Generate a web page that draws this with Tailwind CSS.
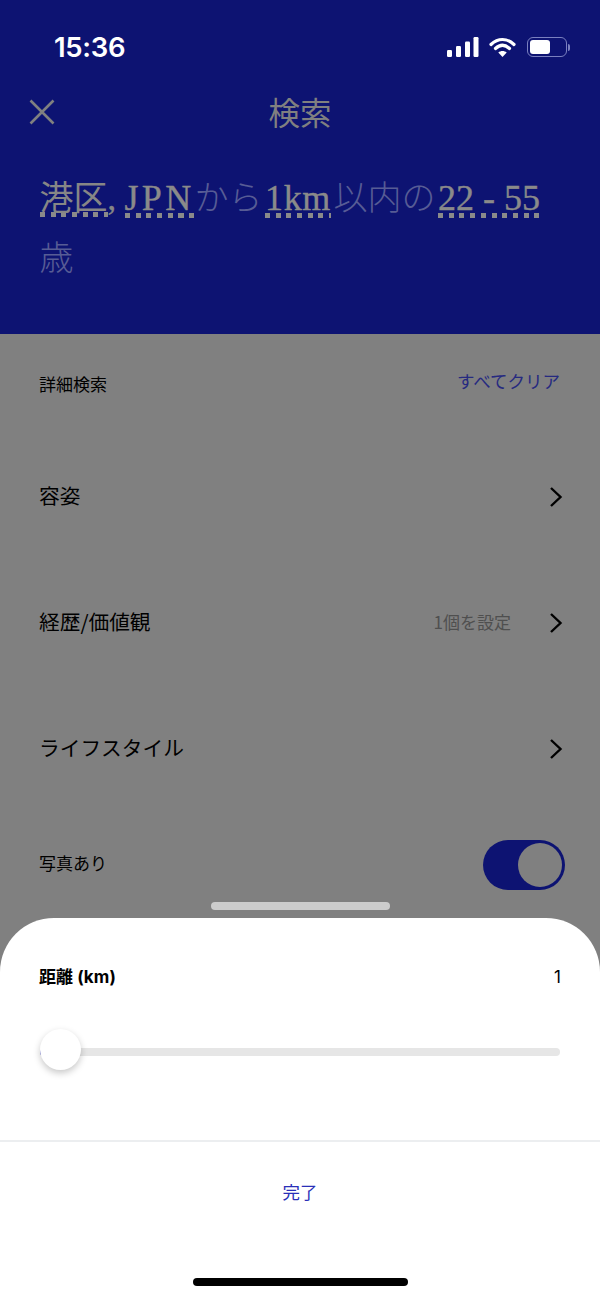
<!DOCTYPE html>
<html lang="ja">
<head>
<meta charset="utf-8">
<script src="https://cdn.jsdelivr.net/npm/@tailwindcss/browser@4"></script>
</head>
<body class="m-0">
<div class="relative w-[600px] h-[1299px] overflow-hidden bg-[#808080] font-['Inter','Noto_Sans_CJK_JP',sans-serif]">

  <!-- Search summary header -->
  <header class="h-[334px] bg-[#0d1372] pt-[30px]">
    <div class="flex items-center justify-between h-[36px] pl-[54px] pr-[30px]">
      <span class="text-[27.500px] font-semibold text-white leading-none tracking-[-0.3px]">15:36</span>
      <div class="flex items-center gap-[10px]">
        <svg width="32" height="20" viewBox="0 0 32 20" class="text-white -mt-[2px]"><g fill="currentColor"><rect x="0" y="13" width="5" height="7" rx="1.2"/><rect x="9" y="9" width="5" height="11" rx="1.2"/><rect x="18" y="4.500" width="5" height="15.500" rx="1.2"/><rect x="26.500" y="0" width="5" height="20" rx="1.2"/></g></svg>
        <svg width="27" height="20" viewBox="0 0 27 20" class="-mt-[2px]"><path d="M2 7.500C9 .8 18 .8 25 7.500M6.500 11.500C11 7.300 16 7.300 20.500 11.500" fill="none" stroke="#fff" stroke-width="3.200" stroke-linecap="round"/><path d="M13.500 20l-4.200-4.600c2.500-2 5.900-2 8.400 0z" fill="#fff"/></svg>
        <div class="flex items-center gap-[1px] -mt-[2px] ml-[1px]">
          <div class="w-[40px] h-[20px] rounded-[6px] border-[1.500px] border-[#7a80c0] p-[2px]">
            <div class="w-[20px] h-full rounded-[3px] bg-white"></div>
          </div>
          <div class="w-[2px] h-[7px] rounded-r-full bg-[#7a80c0]"></div>
        </div>
      </div>
    </div>

    <div class="relative flex items-center justify-center h-[60px] mt-[16px]">
      <svg width="28" height="28" viewBox="0 0 28 28" class="absolute left-[28px] top-[16px]"><path d="M2.500 2.500L25.500 25.500M25.500 2.500L2.500 25.500" stroke="#808080" stroke-width="2.600" fill="none"/></svg>
      <h1 class="text-[31.500px] font-normal text-[#808080] leading-none font-['Noto_Sans_CJK_JP',sans-serif]">検索</h1>
    </div>

    <p class="mt-[26px] px-[39.500px] text-[34px] leading-[60px] font-light text-[#575c95] font-['Liberation_Serif','Noto_Sans_CJK_JP',serif]">
      <span class="text-[#868686] font-normal bg-[repeating-linear-gradient(90deg,#8a8a8a_0,#8a8a8a_5px,transparent_5px,transparent_10.700px)] bg-[size:100%_5px] bg-bottom bg-no-repeat">港区</span><span class="text-[#868686] [-webkit-text-stroke:0.4px_#868686]">, </span><span class="text-[36px] tracking-[3.300px] text-[#8a8a8a] [-webkit-text-stroke:0.4px_#8a8a8a] bg-[repeating-linear-gradient(90deg,#8a8a8a_0,#8a8a8a_5px,transparent_5px,transparent_10.700px)] bg-[size:100%_5px] bg-bottom bg-no-repeat">JPN</span>から<span class="ml-[2.500px] text-[36px] tracking-[0.700px] text-[#8a8a8a] [-webkit-text-stroke:0.4px_#8a8a8a] bg-[repeating-linear-gradient(90deg,#8a8a8a_0,#8a8a8a_5px,transparent_5px,transparent_10.700px)] bg-[size:100%_5px] bg-bottom bg-no-repeat">1km</span><span class="ml-[2.500px]">以内の</span><span class="ml-[2.500px] text-[36px] text-[#8a8a8a] [-webkit-text-stroke:0.4px_#8a8a8a] bg-[repeating-linear-gradient(90deg,#8a8a8a_0,#8a8a8a_5px,transparent_5px,transparent_10.700px)] bg-[size:100%_5px] bg-bottom bg-no-repeat">22 - 55</span><br>歳
    </p>
  </header>

  <!-- Filter rows -->
  <section class="px-[39px] text-black font-['Noto_Sans_CJK_JP',sans-serif]">
    <div class="flex items-center justify-between h-[100px] pr-[1px]">
      <span class="text-[17px] font-normal">詳細検索</span>
      <span class="text-[17.500px] text-[#262a80] -mt-[6px] font-normal">すべてクリア</span>
    </div>
    <div class="flex items-center h-[126px] -mt-[1px]">
      <span class="flex-1 text-[20.700px] font-normal">容姿</span>
      <svg width="14" height="22" viewBox="0 0 14 22" class="mr-[-2px] mt-[2px]"><path d="M2 2l9.500 9L2 20" fill="none" stroke="#000" stroke-width="2.400"/></svg>
    </div>
    <div class="flex items-center h-[126px]">
      <span class="flex-1 text-[20.700px] font-normal">経歴/価値観</span>
      <span class="mr-[38px] text-[17px] text-[#4f4f4f] font-normal">1個を設定</span>
      <svg width="14" height="22" viewBox="0 0 14 22" class="mr-[-2px] mt-[2px]"><path d="M2 2l9.500 9L2 20" fill="none" stroke="#000" stroke-width="2.400"/></svg>
    </div>
    <div class="flex items-center h-[126px]">
      <span class="flex-1 text-[20.700px] font-normal">ライフスタイル</span>
      <svg width="14" height="22" viewBox="0 0 14 22" class="mr-[-2px] mt-[2px]"><path d="M2 2l9.500 9L2 20" fill="none" stroke="#000" stroke-width="2.400"/></svg>
    </div>
    <div class="flex items-center justify-between h-[50px] mt-[29px] -mr-[4px]">
      <span class="text-[17px] font-normal -mt-[4px]">写真あり</span>
      <div class="flex justify-end items-center w-[82px] h-[50px] rounded-full bg-[#0d1372] pr-[3px]">
        <div class="w-[44px] h-[44px] rounded-full bg-[#808080]"></div>
      </div>
    </div>
  </section>

  <!-- Bottom sheet with its drag handle -->
  <div class="absolute left-[211px] top-[902px] w-[179px] h-[8px] rounded-full bg-[#cccccc]"></div>
  <div class="absolute left-0 right-0 top-[918px] bottom-0 rounded-t-[54px] bg-white">
    <div class="flex items-center justify-between h-[26px] mt-[47px] px-[39px]">
      <span class="text-[17px] font-bold text-black tracking-[0.1px] font-['Inter','Noto_Sans_CJK_JP',sans-serif]">距離 (km)</span>
      <span class="text-[17px] text-black">1</span>
    </div>
    <div class="relative mx-[40px] mt-[57px] h-[8px] rounded-full bg-[#e6e6e6]">
      <div class="absolute left-0 top-0 w-[8px] h-[8px] rounded-full bg-[#3a3fc0]"></div>
      <div class="absolute left-0 top-[-19px] w-[41px] h-[41px] rounded-full bg-white shadow-[0_3px_7px_rgba(0,0,0,0.22)]"></div>
    </div>
    <div class="mt-[84px] border-t-2 border-[#eceef0] pt-[37px] text-center">
      <span class="text-[17.500px] text-[#2a2fb8] font-['Noto_Sans_CJK_JP',sans-serif] font-normal">完了</span>
    </div>
    <div class="absolute left-[193px] bottom-[13px] w-[215px] h-[8px] rounded-full bg-black"></div>
  </div>
</div>
</body>
</html>
